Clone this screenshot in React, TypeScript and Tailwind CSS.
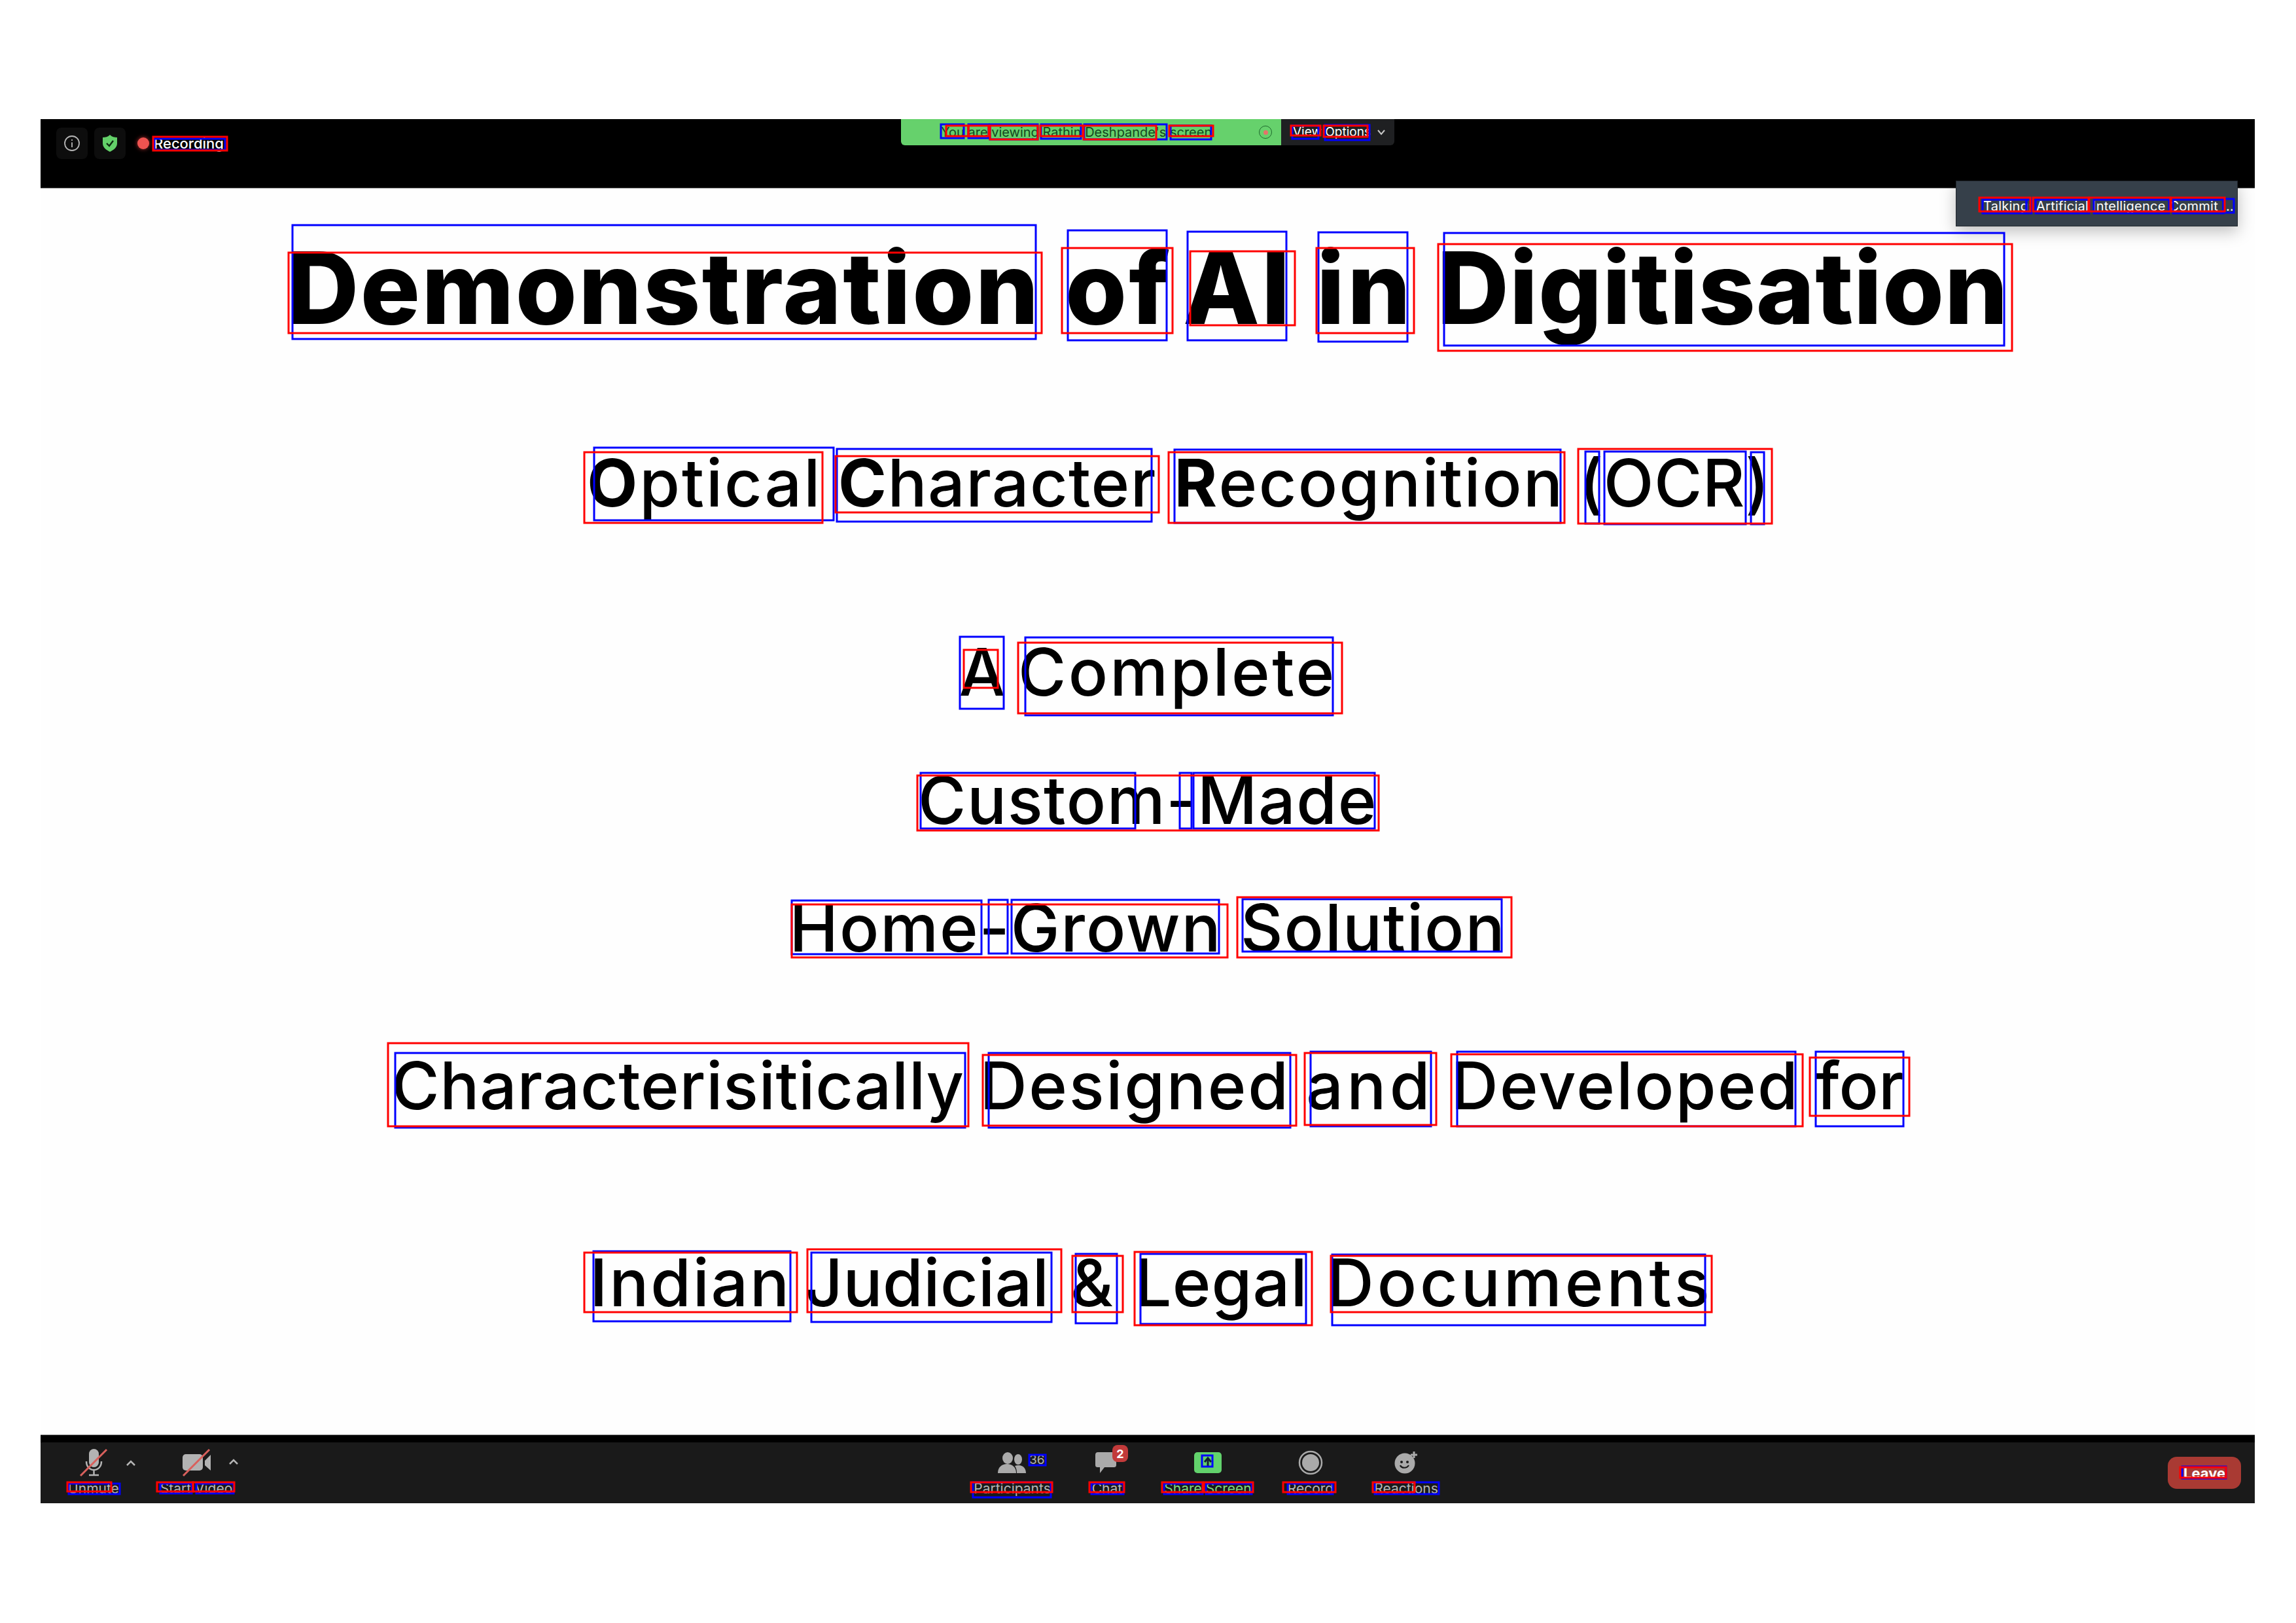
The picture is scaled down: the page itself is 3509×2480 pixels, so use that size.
type Box = [number, number, number, number];

const blueBoxes: Box[] = [
  [447, 344, 1583, 518], [1632, 352, 1783, 520], [1815, 354, 1966, 520], [2015, 355, 2151, 522], [2207, 356, 3063, 528],
  [908, 684, 1274, 795], [1279, 686, 1760, 797], [1795, 687, 2385, 799], [2423, 690, 2444, 800], [2452, 690, 2668, 801], [2676, 691, 2696, 801],
  [1467, 973, 1534, 1083], [1567, 974, 2037, 1093],
  [1407, 1181, 1735, 1266], [1803, 1181, 1821, 1266], [1824, 1181, 2101, 1266],
  [1210, 1376, 1500, 1458], [1511, 1375, 1540, 1457], [1546, 1375, 1863, 1457], [1899, 1374, 2295, 1454],
  [604, 1609, 1475, 1723], [1511, 1609, 1972, 1723], [2003, 1607, 2187, 1721], [2227, 1607, 2744, 1721], [2775, 1607, 2909, 1721],
  [907, 1912, 1208, 2019], [1240, 1914, 1607, 2020], [1644, 1916, 1707, 2022], [1743, 1916, 1996, 2023], [2036, 1917, 2606, 2025],
  [236, 212, 344, 229],
  [1438, 190, 1473, 211], [1480, 190, 1511, 211], [1513, 190, 1586, 213], [1591, 190, 1652, 212], [1657, 190, 1783, 213], [1789, 192, 1851, 213],
  [1975, 192, 2015, 212], [2025, 191, 2093, 214],
  [3030, 305, 3097, 326], [3097, 305, 3105, 326], [3111, 305, 3193, 326], [3200, 305, 3315, 326], [3321, 305, 3398, 326], [3398, 304, 3414, 325],
  [105, 2267, 183, 2283], [245, 2267, 293, 2282], [300, 2267, 357, 2282],
  [1573, 2223, 1598, 2239], [1487, 2265, 1606, 2288], [1668, 2267, 1717, 2283], [1837, 2224, 1853, 2241],
  [1779, 2267, 1838, 2283], [1843, 2267, 1913, 2283], [1968, 2267, 2037, 2283], [2101, 2265, 2199, 2283],
  [3335, 2241, 3402, 2259],
];

const redBoxes: Box[] = [
  [441, 386, 1592, 509], [1623, 379, 1792, 509], [1819, 384, 1979, 497], [2012, 379, 2161, 509], [2198, 373, 3075, 536],
  [893, 691, 1257, 799], [1277, 697, 1771, 783], [1786, 691, 2391, 799], [2412, 686, 2708, 800],
  [1473, 993, 1525, 1051], [1556, 982, 2051, 1090],
  [1402, 1185, 2107, 1269],
  [1210, 1382, 1876, 1463], [1891, 1371, 2310, 1463],
  [593, 1594, 1480, 1721], [1502, 1612, 1981, 1720], [1994, 1609, 2195, 1719], [2218, 1611, 2755, 1721], [2766, 1616, 2918, 1705],
  [893, 1914, 1218, 2005], [1234, 1909, 1622, 2005], [1639, 1919, 1716, 2005], [1734, 1913, 2005, 2025], [2034, 1919, 2616, 2005],
  [234, 209, 347, 230],
  [1446, 192, 1480, 208], [1480, 192, 1511, 208], [1513, 192, 1586, 213], [1590, 192, 1655, 208], [1656, 192, 1767, 213], [1787, 192, 1854, 208],
  [1973, 192, 2018, 207], [2023, 192, 2090, 209],
  [3025, 302, 3103, 323], [3107, 302, 3192, 323], [3193, 302, 3317, 323], [3318, 302, 3400, 323],
  [103, 2265, 170, 2279], [240, 2265, 295, 2279], [295, 2265, 358, 2279],
  [1484, 2265, 1608, 2280], [1665, 2265, 1718, 2280],
  [1776, 2265, 1838, 2280], [1840, 2265, 1915, 2280], [1961, 2265, 2041, 2280], [2098, 2265, 2162, 2280],
  [3332, 2242, 3402, 2258],
];

function Chevron() {
  return (
    <svg width="16" height="10" viewBox="0 0 16 10" fill="none" stroke="#b5b5b5" strokeWidth="2.5">
      <path d="M2 8 8 2l6 6" />
    </svg>
  );
}

function MicOff() {
  return (
    <svg width="48" height="48" viewBox="0 0 48 48" fill="none">
      <rect x="17" y="3" width="15" height="28" rx="7.5" fill="#b3b3b3" />
      <path d="M13 22c0 8 5 13 11.500 13S36 30 36 22M24.500 35v7M17 43h15" stroke="#b3b3b3" strokeWidth="2.500" />
      <path d="M4 44 44 4" stroke="#d9605c" strokeWidth="3" />
    </svg>
  );
}

function VideoOff() {
  return (
    <svg width="48" height="48" viewBox="0 0 48 48" fill="none">
      <rect x="3" y="11" width="31" height="25" rx="5" fill="#b3b3b3" />
      <path d="M37 21 46 12v24l-9-8z" fill="#b3b3b3" />
      <path d="M4 44 44 4" stroke="#d9605c" strokeWidth="3" />
    </svg>
  );
}

function People() {
  return (
    <svg width="44" height="32" viewBox="0 0 44 32" fill="#aaaaaa">
      <ellipse cx="15" cy="9" rx="8" ry="9" />
      <ellipse cx="31" cy="11" rx="6" ry="8" />
      <path d="M0 32c0-9 6-14 14-14s14 5 14 14z" />
      <path d="M29 32c0-5-1-8-3-11 2-1 4-1 6-1 7 0 11 5 11 12z" />
    </svg>
  );
}

function ChatBubble() {
  return (
    <svg width="36" height="32" viewBox="0 0 36 32" fill="#aaaaaa">
      <path d="M4 0h24c3 0 4 2 4 4v15c0 3-1 4-4 4H14L7 32v-9H4c-3 0-4-1-4-4V4c0-2 1-4 4-4z" />
    </svg>
  );
}

function ShareArrow() {
  return (
    <svg width="42" height="32" viewBox="0 0 42 32">
      <rect width="42" height="32" rx="5" fill="#62d26c" />
      <path d="M21 22V10M16 15l5-6 5 6" stroke="#123" strokeWidth="3" fill="none" />
    </svg>
  );
}

function RecordDot() {
  return (
    <svg width="38" height="38" viewBox="0 0 38 38">
      <circle cx="19" cy="19" r="17" fill="none" stroke="#aaaaaa" strokeWidth="2.500" />
      <circle cx="19" cy="19" r="13" fill="#aaaaaa" />
    </svg>
  );
}

function Smile() {
  return (
    <svg width="36" height="34" viewBox="0 0 36 34">
      <circle cx="16" cy="18" r="15.500" fill="#aaaaaa" />
      <circle cx="11" cy="16" r="2" fill="#1a1a1a" />
      <circle cx="20" cy="16" r="2" fill="#1a1a1a" />
      <path d="M9 21c2 5 10 5 13 0" stroke="#1a1a1a" strokeWidth="2.200" fill="none" />
      <path d="M30 0v10M25 5h10" stroke="#aaaaaa" strokeWidth="3" />
    </svg>
  );
}

function ToolItem({
  width,
  label,
  labelClass,
  children,
}: {
  width: string;
  label: string;
  labelClass?: string;
  children: React.ReactNode;
}) {
  return (
    <div className={`relative flex flex-col items-center ${width}`}>
      <div className="flex h-[52px] items-center justify-center">{children}</div>
      <span className={`mt-[4px] whitespace-nowrap text-[21px] leading-[20px] ${labelClass ?? 'text-[#b5b5b5]'}`}>
        {label}
      </span>
    </div>
  );
}

export default function App() {
  return (
    <div className="relative h-[2480px] w-[3509px] overflow-hidden bg-white px-[62px] pt-[182px] font-['Inter',sans-serif]">
      <div className="flex h-[2010px] w-[3384px] flex-col">
        {/* top meeting bar */}
        <header className="relative flex h-[106px] shrink-0 border-b border-[#8a8a8a] bg-black">
          <div className="flex w-[1315px] items-start pl-[24px] pt-[13px]">
            <div className="flex h-[48px] w-[48px] items-center justify-center rounded-lg bg-[#0d0d0d]">
              <svg width="26" height="26" viewBox="0 0 26 26" fill="none" stroke="#b5b5b5" strokeWidth="1.800">
                <circle cx="13" cy="13" r="11" />
                <path d="M13 11.500V19M13 7v2" />
              </svg>
            </div>
            <div className="ml-[10px] flex h-[48px] w-[48px] items-center justify-center rounded-lg bg-[#0d0d0d]">
              <svg width="24" height="26" viewBox="0 0 24 26">
                <path d="M12 0c3 3 7 4 11 4v9c0 6-5 10-11 13C6 23 1 19 1 13V4c4 0 8-1 11-4z" fill="#63d069" />
                <path d="m7 13 4 4 6-8" stroke="#0d2a10" strokeWidth="2.400" fill="none" />
              </svg>
            </div>
            <span className="ml-[18px] mt-[15px] h-[18px] w-[18px] rounded-full bg-[#ef5350] shadow-[0_0_6px_#b03030]" />
            <span className="ml-[7px] mt-[14px] text-[22px] font-medium leading-[20px] text-white">Recording</span>
          </div>
          <div className="flex h-[40px]">
            <div className="flex w-[581px] items-center rounded-bl-md bg-[#66d16c] pl-[61px] text-[20px] leading-[20px] text-[#15481f]">
              <span className="w-[486px] whitespace-nowrap">You are viewing Rathin Deshpande's screen</span>
              <span className="flex h-[20px] w-[20px] items-center justify-center rounded-full border border-[#1e6a2c]">
                <span className="h-[7px] w-[7px] rounded-full bg-[#e5736a]" />
              </span>
            </div>
            <div className="flex w-[173px] items-center gap-[9px] rounded-br-md bg-[#1f2022] pl-[18px] text-[19px] leading-[20px] text-white">
              <span className="whitespace-nowrap">View Options</span>
              <svg width="14" height="10" viewBox="0 0 14 10" fill="none" stroke="#c8c8c8" strokeWidth="2">
                <path d="m2 2 5 6 5-6" />
              </svg>
            </div>
          </div>
          <div className="absolute right-[26px] top-[94px] z-10 flex h-[70px] w-[431px] items-center border border-[#22282e] bg-[#36404a] pl-[41px] pt-[7px] text-[20px] leading-[20px] tracking-[0.25px] text-white shadow-[0_8px_24px_rgba(0,0,0,0.25)]">
            <span className="whitespace-nowrap">Talking: Artificial Intelligence Commit ...</span>
          </div>
        </header>

        {/* shared slide */}
        <main className="flex flex-1 flex-col items-center bg-[#fefefe] text-black">
          <h1 className="mt-[76px] whitespace-nowrap text-[152px] font-extrabold leading-none">
            <span className="tracking-[2.4px]">Demonstration</span>{' '}
            <span className="ml-[5px] tracking-[3.2px]">of</span>{' '}
            <span className="ml-[-16px] tracking-[3.2px]">AI</span>{' '}
            <span className="ml-[4px] tracking-[4.2px]">in</span>{' '}
            <span className="ml-[3px] tracking-[0.9px]">Digitisation</span>
          </h1>
          <p className="mt-[172px] whitespace-nowrap pl-[94px] text-[100px] font-medium leading-none">
            <span className="tracking-[2.9px]">
              <span className="font-bold">O</span>ptical
            </span>{' '}
            <span className="ml-[-2px] tracking-[1.4px]">
              <span className="font-bold">C</span>haracter
            </span>{' '}
            <span className="tracking-[2.4px]">
              <span className="font-bold">R</span>ecognition
            </span>{' '}
            <span className="ml-[-4px] tracking-[0.6px]">(OCR)</span>
          </p>
          <p className="mt-[189px] whitespace-nowrap text-[100px] font-medium leading-none">
            A <span className="ml-[-7px] tracking-[3.3px]">Complete</span>
          </p>
          <p className="mt-[96px] whitespace-nowrap text-[100px] font-medium leading-none tracking-[1.6px]">Custom-Made</p>
          <p className="mt-[95px] whitespace-nowrap text-[100px] font-medium leading-none tracking-[1.9px]">
            Home-Grown Solution
          </p>
          <p className="mt-[141px] whitespace-nowrap text-[100px] font-medium leading-none">
            <span className="tracking-[0.7px]">Characterisitically</span>{' '}
            <span className="ml-[-3px] tracking-[2.7px]">Designed</span>{' '}
            <span className="ml-[-2px] tracking-[5.2px]">and</span> <span className="tracking-[2.4px]">Developed</span>{' '}
            <span className="ml-[-2px] tracking-[0.2px]">for</span>
          </p>
          <p className="mt-[201px] whitespace-nowrap pl-[11px] text-[100px] font-medium leading-none">
            <span className="tracking-[2.7px]">Indian</span>{' '}
            <span className="ml-[-5px] tracking-[0.4px]">Judicial</span> <span className="ml-[6px]">&</span>{' '}
            <span className="ml-[6px] tracking-[1.1px]">Legal</span>{' '}
            <span className="ml-[2px] tracking-[5px]">Documents</span>
          </p>
        </main>
      </div>

      {/* bottom toolbar */}
      <footer className="flex h-[105px] w-[3384px] flex-col border-t border-[#8a8a8a] bg-black">
        <div className="mt-[11px] flex flex-1 items-start bg-[#1a1a1a] pt-[5px]">
          <div className="flex w-[1412px] pl-[41px]">
            <ToolItem width="w-[80px]" label="Unmute">
              <MicOff />
            </ToolItem>
            <div className="flex w-[34px] justify-center pt-[22px]">
              <Chevron />
            </div>
            <ToolItem width="w-[166px]" label="Start Video">
              <VideoOff />
              <span className="absolute left-[132px] top-[20px]">
                <Chevron />
              </span>
            </ToolItem>
          </div>
          <ToolItem width="w-[146px]" label="Participants">
            <People />
            <span className="absolute left-[99px] top-[12px] text-[19px] leading-[20px] text-[#b5b5b5]">36</span>
          </ToolItem>
          <ToolItem width="w-[144px]" label="Chat">
            <ChatBubble />
            <span className="absolute left-[80px] top-[-1px] flex h-[26px] w-[24px] items-center justify-center rounded-lg bg-[#c23a3a] text-[18px] font-bold text-white">
              2
            </span>
          </ToolItem>
          <ToolItem width="w-[164px]" label="Share Screen" labelClass="text-[#7fd87f]">
            <ShareArrow />
          </ToolItem>
          <ToolItem width="w-[150px]" label="Record">
            <RecordDot />
          </ToolItem>
          <ToolItem width="w-[142px]" label="Reactions">
            <Smile />
          </ToolItem>
          <button className="ml-auto mr-[21px] mt-[17px] flex h-[49px] w-[112px] items-center justify-center rounded-[14px] bg-[#a93a33] text-[22px] font-bold leading-[20px] text-white">
            Leave
          </button>
        </div>
      </footer>

      {/* detection boxes drawn over the whole page */}
      <svg className="pointer-events-none absolute left-0 top-0 z-20" width="3509" height="2480" viewBox="0 0 3509 2480" fill="none">
        {blueBoxes.map(([x1, y1, x2, y2], i) => (
          <rect key={`b${i}`} x={x1} y={y1} width={x2 - x1} height={y2 - y1} stroke="#0000ff" strokeWidth="3" />
        ))}
        {redBoxes.map(([x1, y1, x2, y2], i) => (
          <rect key={`r${i}`} x={x1} y={y1} width={x2 - x1} height={y2 - y1} stroke="#ff0000" strokeWidth="3" />
        ))}
      </svg>
    </div>
  );
}
